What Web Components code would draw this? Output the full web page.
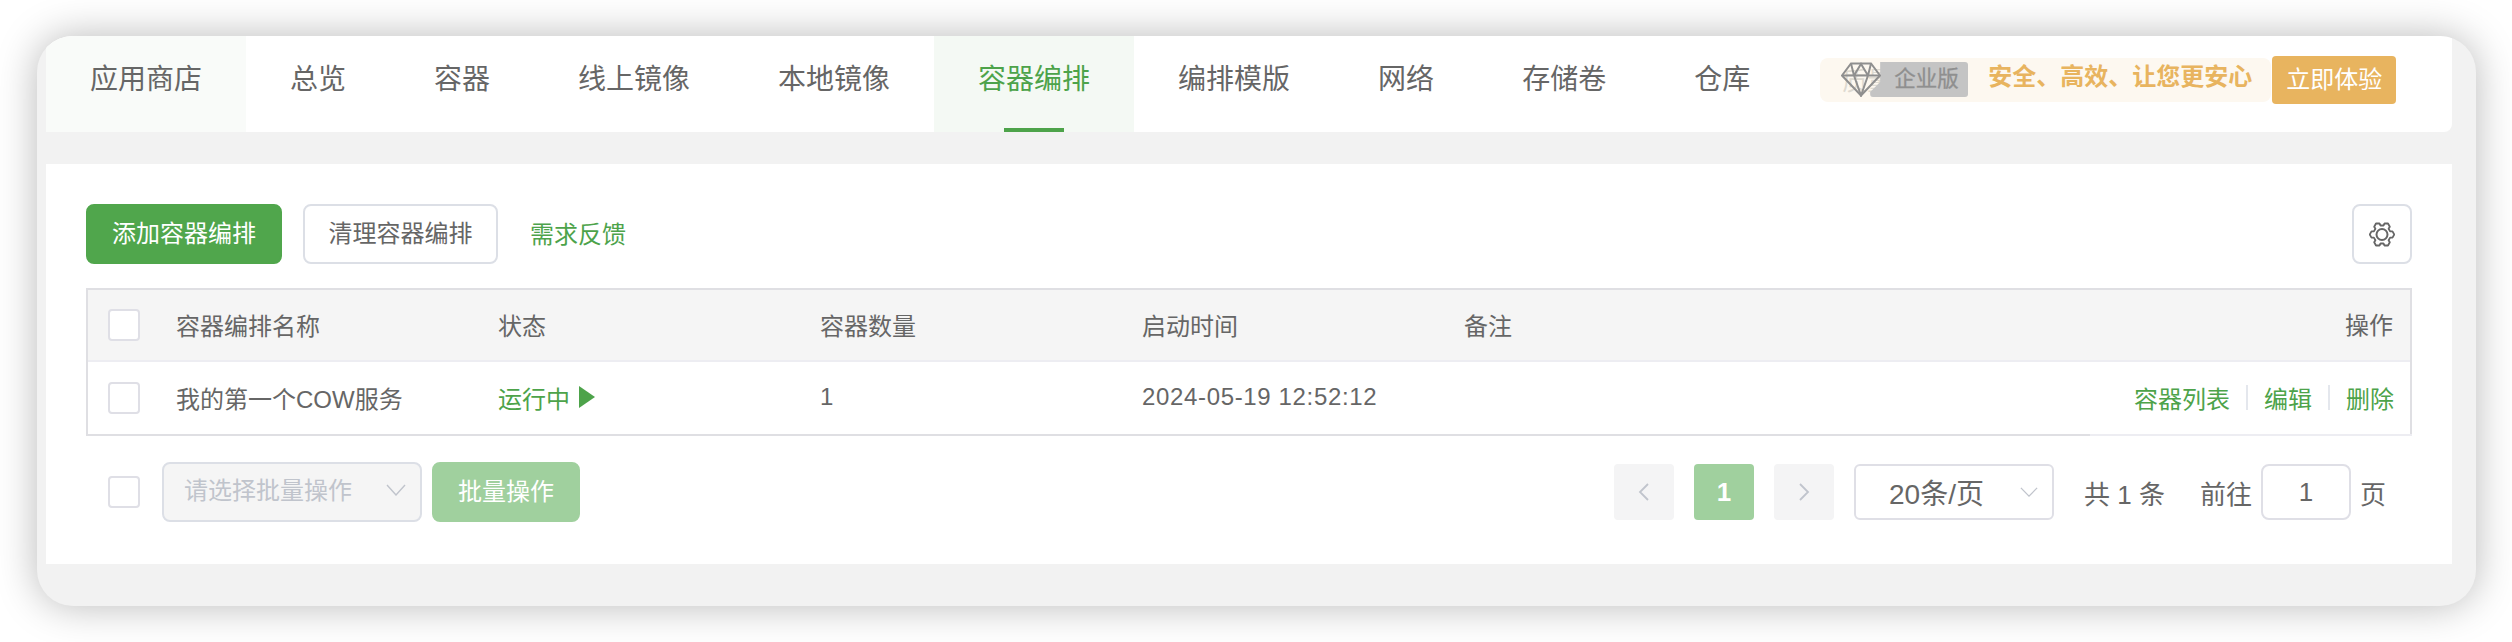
<!DOCTYPE html>
<html><head><meta charset="utf-8">
<style>
html,body{margin:0;padding:0;background:#fff;width:2512px;height:642px;overflow:hidden}
body{font-family:"Liberation Sans","Noto Sans CJK SC",sans-serif;color:#666}
</style></head><body>
<app-shell>
  <top-nav slot="nav"></top-nav>
  <compose-panel></compose-panel>
</app-shell>
<script>
const def=(n,html)=>customElements.define(n,class extends HTMLElement{constructor(){super();this.attachShadow({mode:'open'}).innerHTML=html}});
const chev=(w,h,c)=>`<svg width="${w}" height="${h}" viewBox="0 0 20 12" fill="none" stroke="${c}" stroke-width="1.4" preserveAspectRatio="none"><path d="M1 1l9 10 9-10"/></svg>`;
def('app-shell',`<style>
:host{display:block;margin:36px 36.5px;width:2439px;height:570px;box-sizing:border-box;padding:0 23.5px 0 9.5px;background:#f2f2f2;border-radius:36px;box-shadow:0 0 40px rgba(0,0,0,.28);overflow:hidden}
.w{display:flex;flex-direction:column;gap:32px;height:100%}
</style><div class="w"><slot name="nav"></slot><slot></slot></div>`);
def('top-nav',`<style>
:host{display:flex;height:96px;background:#fff;border-radius:0 0 8px 0;overflow:hidden;font-size:28px;color:#666;position:relative}
.promo{margin:22px 0 0 26px;display:flex;align-items:flex-start}
</style>
<nav-tab style="--b:#f9fbf9">应用商店</nav-tab><nav-tab>总览</nav-tab><nav-tab>容器</nav-tab><nav-tab>线上镜像</nav-tab><nav-tab>本地镜像</nav-tab><nav-tab style="--b:#f4f9f4;--c:#4da34a;--u:#4da34a">容器编排</nav-tab><nav-tab>编排模版</nav-tab><nav-tab>网络</nav-tab><nav-tab>存储卷</nav-tab><nav-tab>仓库</nav-tab>
<promo-bar class="promo"></promo-bar>`);
def('nav-tab',`<style>
:host{display:block;box-sizing:border-box;height:96px;padding:0 44px;line-height:88px;background:var(--b,transparent);color:var(--c,#666);position:relative;white-space:nowrap}
i{position:absolute;left:50%;margin-left:-30px;bottom:0;width:60px;height:4px;background:var(--u,transparent)}
</style><slot></slot><i></i>`);
def('promo-bar',`<style>
:host{display:flex}
.bar{position:relative;box-sizing:border-box;width:451px;height:44px;background:#fdf8f0;border-radius:8px;display:flex;align-items:center}
.ghost{position:absolute;left:22px;top:7px;font-size:25px;line-height:32px;color:#dedad1}
.tag{position:absolute;left:50px;top:4px;width:98px;height:35px;background:#c4c4c4;border-radius:3px;clip-path:polygon(10px 0,100% 0,100% 100%,0 100%,0 30px,10px 20px);color:#8f8f8f;font-size:21.5px;line-height:35px;text-indent:24px;white-space:nowrap;-webkit-text-stroke:.3px #8f8f8f}
svg{position:absolute;left:21px;top:4px}
.txt{position:absolute;left:168px;top:0;line-height:38px;font-size:24px;font-weight:700;color:#e8b45f;white-space:nowrap}
.go{box-sizing:border-box;width:124px;height:48px;margin:-2px 0 0 1px;background:#e8b45f;color:#fff;border-radius:4px;font-size:24px;line-height:48px;text-align:center}
</style>
<div class="bar"><span class="ghost">质量</span><span class="tag">企业版</span>
<svg width="40" height="35" viewBox="0 0 40 35" fill="none" stroke="#8f8f8f" stroke-width="2"><path d="M10 1.500h20l9 12L20 33.500 1 13.500z"/><path d="M1 13.500h38M13 13.500L20 2l7 11.500M13 13.500l7 20 7-20M10 1.500l3 12M30 1.500l-3 12"/></svg>
<span class="txt">安全、高效、让您更安心</span></div><div class="go">立即体验</div>`);
def('ui-btn',`<style>
:host{display:block;box-sizing:border-box;height:60px;line-height:56px;border:2px solid #dcdfe6;border-radius:8px;padding:0 24px;font-size:24px;color:#666;background:#fff;white-space:nowrap;text-align:center}
:host([primary]){background:#50a64c;border-color:#50a64c;color:#fff}
:host([off]){background:#a0d09e;border-color:#a0d09e;color:#fff}
</style><slot></slot>`);
def('ui-check',`<style>:host{display:block;box-sizing:border-box;width:32px;height:32px;border:2px solid #dfdfe6;border-radius:4px;background:#fff}</style>`);
def('compose-panel',`<style>
:host{display:block;box-sizing:border-box;height:400px;background:#fff;padding:40px 40px 0 40px;font-size:24px;color:#666}
.bar{display:flex;align-items:center;height:60px}
.link{color:#4da34a;margin-left:32px;margin-top:-3px}
.sp{flex:1}
.gear{width:60px;padding:0;display:flex;align-items:center;justify-content:center}
.foot{display:flex;align-items:center;margin-top:26px;height:60px;padding-left:22px}
.sel{box-sizing:border-box;width:260px;height:60px;margin-left:22px;background:#f5f5f5;border:2px solid #dcdfe6;border-radius:8px;color:#c0c4cc;padding:0 14px 0 20px;display:flex;align-items:center;justify-content:space-between;line-height:52px}
.sel span{margin-top:-2px}.sel svg{margin-top:-4px}
</style>
<div class="bar"><ui-btn primary style="width:196px;padding:0">添加容器编排</ui-btn><ui-btn style="width:195px;margin-left:21px;padding:0">清理容器编排</ui-btn><span class="link">需求反馈</span><span class="sp"></span>
<ui-btn class="gear"><span style="display:flex;justify-content:center"><svg width="26" height="27" viewBox="0 0 26 27" fill="none" stroke="#666" stroke-width="1.800" stroke-linejoin="round"><path d="M7 2.500L10.500 2.500L11.500 4.500L14.500 4.500L15.500 2.500L19 2.500L20.800 5.700L19.600 7.800L21.100 10.400L23.500 10.400L25.300 13.500L23.500 16.600L21.100 16.600L19.600 19.200L20.800 21.300L19 24.500L15.500 24.500L14.500 22.500L11.500 22.500L10.500 24.500L7 24.500L5.200 21.300L6.400 19.200L4.900 16.600L2.500 16.600L.7 13.500L2.500 10.400L4.900 10.400L6.400 7.800L5.200 5.700Z"/><circle cx="13" cy="13.500" r="5.500" stroke-width="2"/></svg></span></ui-btn></div>
<data-table></data-table>
<div class="foot"><ui-check></ui-check><div class="sel"><span>请选择批量操作</span>${chev(20,12,'#c0c4cc')}</div><ui-btn off style="width:148px;margin-left:10px;padding:0">批量操作</ui-btn><span class="sp"></span><page-bar></page-bar></div>`);
def('data-table',`<style>
:host{display:block;box-sizing:border-box;margin-top:24px;height:148px;border:2px solid #dfdfe3;border-bottom:0;position:relative;font-size:24px;color:#666}
.r{display:grid;grid-template-columns:88px repeat(4,322px) 1fr;align-items:center}
.r>span{margin-top:-2px}
.h{height:70px;background:#f5f5f5;border-bottom:2px solid #ededf2}
.b{height:72px;background:#fff}
.f{height:2px;margin-left:-2px;margin-right:-2px;background:linear-gradient(90deg,#dfdfe3 0,#dfdfe3 2004px,#ededf2 2004px)}
ui-check{margin-left:20px}
.ok{color:#4da34a;display:flex;align-items:center}
.ok svg{margin-left:9px}
.ops{display:flex;justify-content:flex-end;align-items:center;padding-right:16px;color:#4da34a}
.ops i{width:2px;height:25px;background:#e4e7ed;margin:0 16px}
.d{letter-spacing:.65px}
.oh{position:absolute;right:17px;top:12px;line-height:48px}
</style>
<div class="r h"><ui-check></ui-check><span>容器编排名称</span><span>状态</span><span>容器数量</span><span>启动时间</span><span>备注</span></div>
<div class="r b"><ui-check></ui-check><span>我的第一个COW服务</span><span class="ok">运行中<svg width="16" height="22" viewBox="0 0 16 22"><path d="M0 0l16 11L0 22z" fill="#4da34a"/></svg></span><span>1</span><span class="d">2024-05-19 12:52:12</span><span class="ops"><span>容器列表</span><i></i><span>编辑</span><i></i><span>删除</span></span></div>
<div class="f"></div>
<span class="oh">操作</span>`);
def('page-bar',`<style>
:host{display:flex;align-items:center;height:60px;padding-right:26px;color:#666;font-size:26px}
.p{box-sizing:border-box;width:60px;height:56px;border-radius:4px;background:#f4f4f5;display:flex;align-items:center;justify-content:center;margin-right:20px;color:#fff;font-weight:700;font-size:26px}
.on{background:#a0d09e}
.s{box-sizing:border-box;width:200px;height:56px;border:2px solid #dfdfe6;border-radius:6px;display:flex;align-items:center;justify-content:space-between;font-size:28px;padding:0 14px 0 33px}
.t{margin-left:30px}.t2{margin-left:35px}
.i{box-sizing:border-box;width:90px;height:56px;border:2px solid #dfdfe6;border-radius:8px;margin:0 9px;text-align:center;line-height:52px}
</style>
<span class="p"><svg width="12" height="18" viewBox="0 0 12 18" fill="none" stroke="#c0c4cc" stroke-width="1.800"><path d="M10 1L2 9l8 8"/></svg></span><span class="p on">1</span><span class="p"><svg width="12" height="18" viewBox="0 0 12 18" fill="none" stroke="#c0c4cc" stroke-width="1.800"><path d="M2 1l8 8-8 8"/></svg></span>
<span class="s"><span>20条/页</span>${chev(18,10,'#c0c4cc')}</span><span class="t">共 1 条</span><span class="t2">前往</span><span class="i">1</span><span>页</span>`);
</script></body></html>
